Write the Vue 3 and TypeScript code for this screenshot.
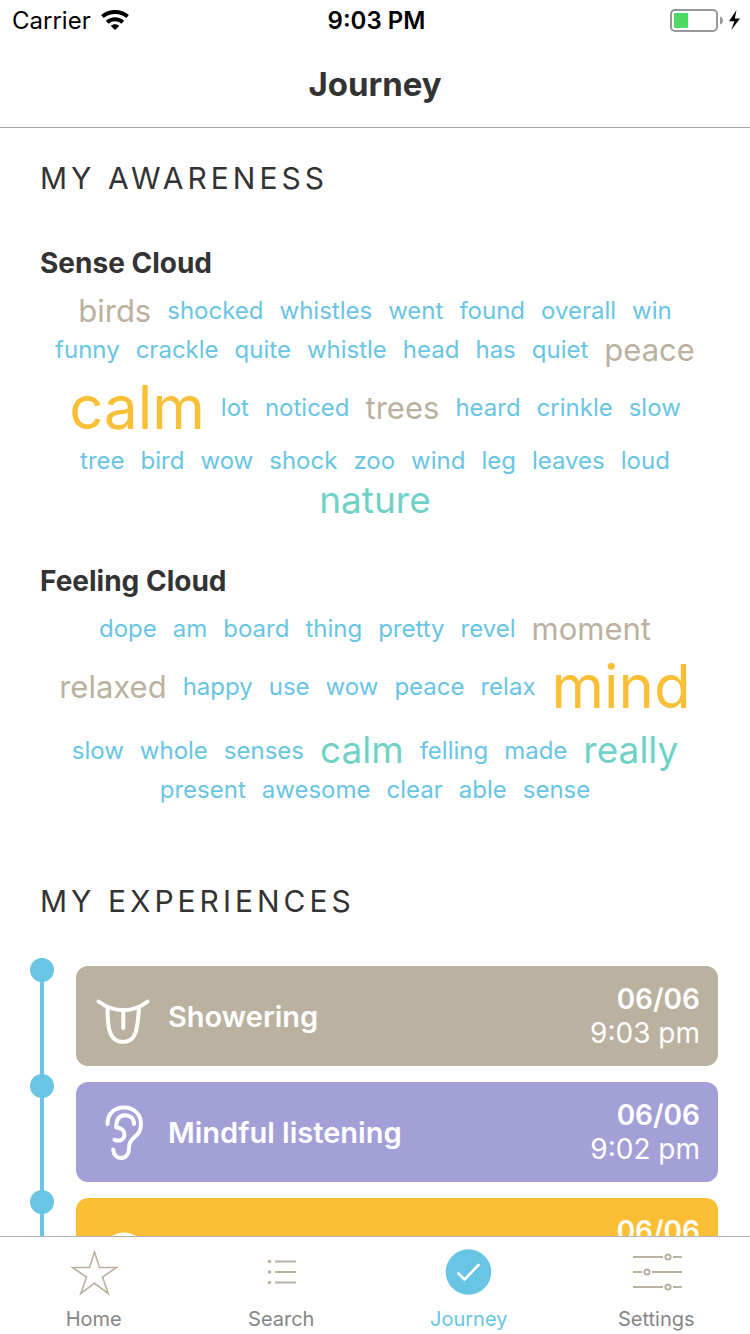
<script setup lang="ts">
type Size = 'small' | 'medium' | 'large' | 'huge'
interface Word { text: string; size: Size }
interface Cloud { title: string; rows: Word[][] }
interface Experience { name: string; icon: 'tongue' | 'ear' | 'eye'; date: string; time: string; tone: string }

// A trailing mark sets a word's weight in the cloud: "+" medium, "++" large, "+++" huge.
const parse = (line: string): Word[] =>
  line.split(' ').map((raw) => {
    const text = raw.replace(/\++$/, '')
    const sizes: Size[] = ['small', 'medium', 'large', 'huge']
    return { text, size: sizes[raw.length - text.length] }
  })

const clouds: Cloud[] = [
  {
    title: 'Sense Cloud',
    rows: [
      'birds+ shocked whistles went found overall win',
      'funny crackle quite whistle head has quiet peace+',
      'calm+++ lot noticed trees+ heard crinkle slow',
      'tree bird wow shock zoo wind leg leaves loud',
      'nature++',
    ].map(parse),
  },
  {
    title: 'Feeling Cloud',
    rows: [
      'dope am board thing pretty revel moment+',
      'relaxed+ happy use wow peace relax mind+++',
      'slow whole senses calm++ felling made really++',
      'present awesome clear able sense',
    ].map(parse),
  },
]

const experiences: Experience[] = [
  { name: 'Showering', icon: 'tongue', date: '06/06', time: '9:03 pm', tone: 'sand' },
  { name: 'Mindful listening', icon: 'ear', date: '06/06', time: '9:02 pm', tone: 'violet' },
  { name: 'Mindful seeing', icon: 'eye', date: '06/06', time: '9:01 pm', tone: 'amber' },
]

const tabs = ['Home', 'Search', 'Journey', 'Settings']
const activeTab = 'Journey'
</script>

<template>
  <div class="screen">
    <div class="status">
      <div class="carrier">
        <span>Carrier</span>
        <svg width="28" height="20" viewBox="0 0 28 20" aria-hidden="true">
          <g fill="none" stroke="#000" stroke-width="4">
            <path d="M1.4 6.6C8.6 .4 19.4 .4 26.600 6.600" />
            <path d="M6.200 12.200C10.600 8.200 17.400 8.200 21.800 12.200" />
          </g>
          <path d="M14 20L9.800 15.900C12 13.600 16 13.600 18.200 15.900Z" />
        </svg>
      </div>
      <span class="clock">9:03 PM</span>
      <div class="battery">
        <svg width="71" height="24" viewBox="0 0 71 24" aria-hidden="true">
          <rect x="1" y="2" width="46" height="21" rx="4" fill="none" stroke="#98989b" stroke-width="2" />
          <rect x="4" y="5" width="14" height="15" rx="1" fill="#4cd964" />
          <path d="M50 8.500C54 9.500 54 15.500 50 16.500Z" fill="#98989b" />
          <path d="M66.500 2L59 13.300H64.300L61.300 22L70 10.600H64.800Z" />
        </svg>
      </div>
    </div>

    <header class="header"><h1>Journey</h1></header>

    <main class="content">
      <section class="awareness">
        <h2>MY AWARENESS</h2>
        <div v-for="cloud in clouds" :key="cloud.title" class="cloud">
          <h3>{{ cloud.title }}</h3>
          <div v-for="(row, i) in cloud.rows" :key="i" class="row">
            <span v-for="word in row" :key="word.text" :class="['word', word.size]">{{ word.text }}</span>
          </div>
        </div>
      </section>

      <section class="experiences">
        <h2>MY EXPERIENCES</h2>
        <ol class="timeline">
          <li v-for="item in experiences" :key="item.name">
            <div class="rail"><span class="dot"></span></div>
            <article :class="['card', item.tone]">
              <svg class="card-icon" width="60" height="60" viewBox="0 0 60 60" aria-hidden="true">
                <g fill="none" stroke="#fff" stroke-width="4" stroke-linecap="round" stroke-linejoin="round">
                  <template v-if="item.icon === 'tongue'">
                    <path d="M4.500 15.500C20 27 39 27 53.500 15.500" />
                    <path d="M13.500 21.500C13.500 43 15.500 56 29 56S43.500 43 45 21.500" />
                    <path d="M29.300 24V42" />
                  </template>
                  <template v-else-if="item.icon === 'ear'">
                    <path d="M13.500 22C13.500 11.500 20.500 5.500 30 5.500C40 5.500 47 12.500 47 22C47 36 35 34 35 46C35 52 32 56 27 56C22.500 56 19.500 52 19.200 47.500" />
                    <path d="M40 22C40 17 36.500 13.300 31 13.300C25.500 13.300 22.200 17.500 22.200 25.500C27 25.500 30.500 28.500 30.500 32.500C30.500 37 26 40 20.500 37.800" />
                  </template>
                  <template v-else>
                    <path d="M7 34C18 10.500 42 10.500 53 34C42 54 18 54 7 34Z" />
                    <circle cx="30" cy="33" r="8" />
                  </template>
                </g>
              </svg>
              <h4>{{ item.name }}</h4>
              <div class="when">
                <strong>{{ item.date }}</strong>
                <span>{{ item.time }}</span>
              </div>
            </article>
          </li>
        </ol>
      </section>
    </main>

    <nav class="tabs">
      <a v-for="tab in tabs" :key="tab" href="#" :class="{ active: tab === activeTab }">
        <svg width="52" height="48" viewBox="0 0 52 48" aria-hidden="true">
          <path v-if="tab === 'Home'" d="M26.500 4L31.500 19.500H48.500L34.500 29L40.200 45.500L26.500 35.300L12.800 45.500L18.500 29L4.500 19.500H21.500Z" fill="none" stroke="#bbb1a0" stroke-width="1.600" />
          <template v-else-if="tab === 'Search'">
            <path d="M20 13.500H41M20 24H41M20 34.500H41" stroke="#bbb1a0" stroke-width="2" />
            <g fill="#bbb1a0">
              <circle cx="14.500" cy="13.500" r="1.800" />
              <circle cx="14.500" cy="24" r="1.800" />
              <circle cx="14.500" cy="34.500" r="1.800" />
            </g>
          </template>
          <template v-else-if="tab === 'Journey'">
            <circle cx="25.500" cy="24" r="22.800" fill="#68c5e4" />
            <path d="M15.500 25.500L21.500 31.500L35.500 17" fill="none" stroke="#fff" stroke-width="2.600" stroke-linecap="round" stroke-linejoin="round" />
          </template>
          <g v-else fill="none" stroke="#bbb1a0" stroke-width="2">
            <path d="M3 9H33M43 9H52M3 24H12M22 24H52M3 39H33M43 39H52" />
            <circle cx="38" cy="9" r="2.600" />
            <circle cx="17" cy="24" r="2.600" />
            <circle cx="38" cy="39" r="2.600" />
          </g>
        </svg>
        <span>{{ tab }}</span>
      </a>
    </nav>
  </div>
</template>

<style>
html,
body,
#app {
  height: 100%;
}
body {
  margin: 0;
}
</style>

<style scoped>
* {
  box-sizing: border-box;
}
h1,
h2,
h3,
h4,
ol {
  margin: 0;
  padding: 0;
}
.screen {
  display: flex;
  flex-direction: column;
  height: 100%;
  overflow: hidden;
  background: #fff;
  color: #333;
  font-family: Inter, "Liberation Sans", sans-serif;
}
.status {
  display: grid;
  grid-template-columns: 1fr auto 1fr;
  align-items: center;
  flex: none;
  height: 40px;
  padding: 0 9px 0 12px;
  color: #000;
  font-size: 24px;
}
.carrier {
  display: flex;
  align-items: center;
  gap: 10px;
}
.clock {
  font-weight: 600;
}
.battery {
  display: flex;
  justify-content: flex-end;
}
.header {
  display: flex;
  align-items: center;
  justify-content: center;
  flex: none;
  height: 88px;
  border-bottom: 1px solid #a7a7a7;
}
h1 {
  font-size: 33px;
  font-weight: 700;
}
.content {
  flex: 1;
  min-height: 0;
  overflow-y: auto;
  scrollbar-width: none;
}
.awareness {
  padding: 32px 40px 0;
}
h2 {
  font-size: 30px;
  line-height: 36px;
  font-weight: 400;
  letter-spacing: 4px;
}
.cloud {
  padding-top: 49px;
}
.cloud + .cloud {
  padding-top: 38px;
}
h3 {
  margin-bottom: 10px;
  font-size: 28px;
  line-height: 36px;
  font-weight: 700;
}
.row {
  display: flex;
  flex-wrap: wrap;
  align-items: center;
  justify-content: center;
  column-gap: 16px;
}
.word {
  font-size: 24px;
  line-height: 29px;
  color: #68c5e4;
}
.medium {
  font-size: 31px;
  line-height: 39px;
  color: #bbb1a0;
}
.large {
  font-size: 37px;
  line-height: 50px;
  color: #70d2c6;
}
.huge {
  font-size: 60px;
  line-height: 77px;
  color: #fabf35;
}
.experiences {
  padding-top: 79px;
}
.experiences h2 {
  padding: 0 40px;
}
.timeline {
  padding: 39px 32px 0 30px;
  list-style: none;
}
.timeline li {
  display: flex;
  gap: 22px;
}
.rail {
  width: 24px;
  background: linear-gradient(#68c5e4, #68c5e4) center / 4px 100% no-repeat;
}
.dot {
  display: block;
  width: 24px;
  height: 24px;
  border-radius: 50%;
  background: #68c5e4;
}
.card {
  display: flex;
  align-items: center;
  flex: 1;
  height: 100px;
  margin: 8px 0;
  padding: 0 18px;
  border-radius: 12px;
  color: #fff;
}
.sand {
  background: #bbb1a0;
}
.violet {
  background: #a3a0d8;
}
.amber {
  background: #fabf35;
}
.card-icon {
  flex: none;
  margin-right: 14px;
}
h4 {
  flex: 1;
  font-size: 29px;
  font-weight: 600;
}
.when {
  display: flex;
  flex-direction: column;
  align-items: flex-end;
  font-size: 28px;
  line-height: 34px;
}
.when strong {
  font-weight: 600;
}
.tabs {
  display: grid;
  grid-template-columns: repeat(4, 1fr);
  flex: none;
  height: 98px;
  border-top: 1px solid #b2b2b2;
  background: #fff;
}
.tabs a {
  display: flex;
  flex-direction: column;
  align-items: center;
  gap: 11px;
  padding-top: 11px;
  color: #868686;
  font-size: 20px;
  line-height: 24px;
  text-decoration: none;
}
.tabs .active {
  color: #68c5e4;
}
</style>
